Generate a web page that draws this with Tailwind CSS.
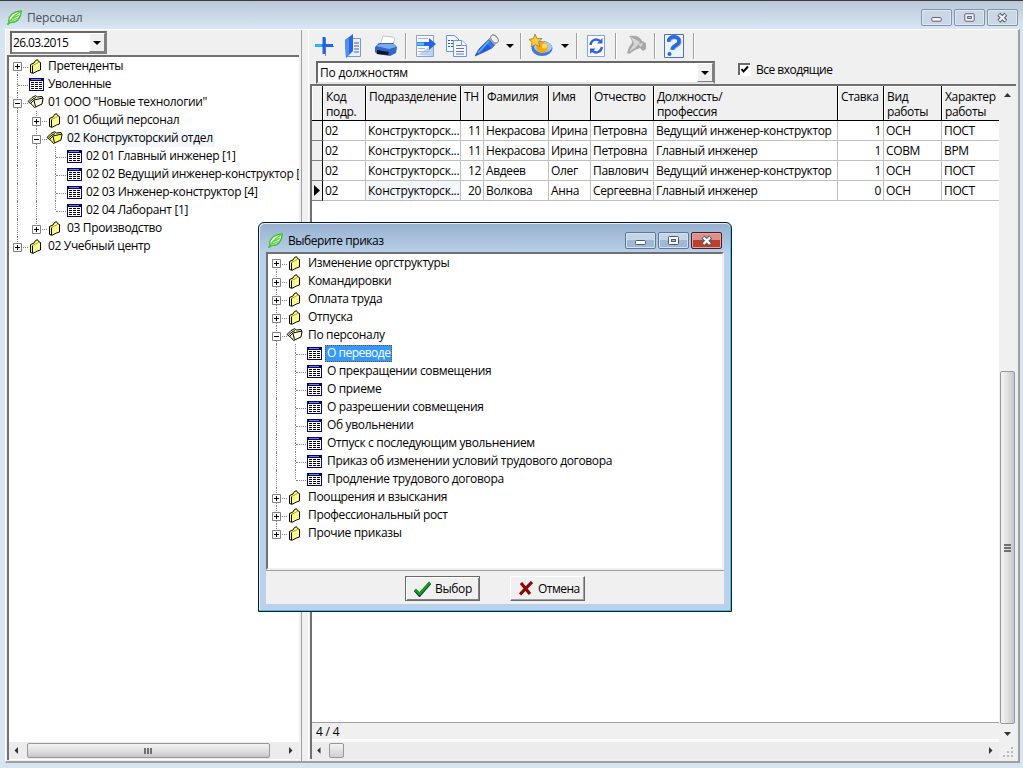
<!DOCTYPE html>
<html lang="ru">
<head>
  <meta charset="UTF-8" />
  <meta name="viewport" content="width=device-width, initial-scale=1.0" />
  <title>Персонал</title>
  <script src="https://cdn.jsdelivr.net/npm/@tailwindcss/browser@4"></script>
</head>
<body class="w-[1023px] h-[768px] overflow-hidden bg-[#d7e4f2] font-['Open_Sans','Noto_Sans',sans-serif] text-[12px] leading-[15px] tracking-[-0.34px] text-black cursor-default">

  <!-- Icon sprite -->
  <svg class="hidden">
    <symbol id="leaf" viewBox="0 0 15 15">
      <path d="M.8 14 2 12.6C.5 6 6 1.5 14.2.8 14 8 10 13 3.5 12.4L1.5 14z" fill="#eafbe0" stroke="#3fbf2c" stroke-width="1.3"/>
      <path d="M1 14C4 9 8 5 13.5 1.5M4 11 10.5 8.5M6 8.5 12 5" fill="none" stroke="#55cc3c" stroke-width="1.1"/>
    </symbol>
    <symbol id="book" viewBox="0 0 13 15">
      <path d="M1.500 5.500 5 4 6.500 1.500 8.500.7 9.500 2.500 11.500 3.500V11L8.500 12 4 14.300 1.500 13.500z" fill="#ffff70"/>
      <path d="M5.500 6V13M7.500 4V12M9.500 4V11" stroke="#fff" stroke-dasharray="1 1"/>
      <path d="M1.500 5.500 5 4 6.500 1.500 8.500.7 9.500 2.500 11.500 3.500V11L8.500 12 4 14.300 1.500 13.500z" fill="none" stroke="#000"/>
      <path d="M3.500 6.500V14" fill="none" stroke="#000"/>
      <path d="M3.500 6.500 9.500 3.500" fill="none" stroke="#808000" stroke-width=".7"/>
    </symbol>
    <symbol id="book-open" viewBox="0 0 17 14">
      <path d="M1 6.500 5 2.500 8.500.7 10.500 2 15 1.500 16 3.500 15 9 7.500 12.500 5 9.500z" fill="#ffff60" stroke="#000"/>
      <path d="M2.500 7 6 4 9 2.500M4 8 7 5 16 3M7 5.500 8.500 11.500" fill="none" stroke="#000"/>
    </symbol>
    <symbol id="book-white" viewBox="0 0 17 14">
      <path d="M1 6.500 5 2.500 8.500.7 10.500 2 15 1.500 16 3.500 15 9 7.500 12.500 5 9.500z" fill="#ffffd8" stroke="#000"/>
      <path d="M2.500 7 6 4 9 2.500M4 8 7 5 16 3M7 5.500 8.500 11.500" fill="none" stroke="#000"/>
    </symbol>
    <symbol id="table" viewBox="0 0 15 13">
      <path d="M0 0H15V13H0z" fill="#000080"/>
      <path d="M1 3H14V12H1z" fill="#fff"/>
      <path d="M2 1.5H12" stroke="#8080c0"/>
      <path d="M2 4.5H13M2 6.5H13M2 8.5H13M2 10.5H13" stroke="#000" stroke-dasharray="3 1"/>
    </symbol>
    <symbol id="tri-down" viewBox="0 0 8 4"><path d="M0 0H8L4 4z"/></symbol>
  </svg>

  <div class="relative w-[1023px] h-[768px] flex flex-col">
    <!-- Title bar -->
    <header class="h-[29px] shrink-0 border-t border-[#3b3b40] bg-linear-to-b from-[#b9c8d8] to-[#d9e6f4] flex items-start pl-[7px] pr-[5px]">
      <svg class="w-[15px] h-[15px] mt-[9px]"><use href="#leaf"/></svg>
      <span class="ml-[5px] mt-[9px] tracking-[-0.2px] text-[#4a525c]">Персонал</span>
      <div class="ml-auto mt-2 flex gap-[2px]">
        <div class="w-[31px] h-[17px] rounded-[2px] border border-[#8492a6] bg-[#c9d7e7] shadow-[inset_0_0_0_1px_#dfe9f4] flex justify-center items-center">
          <svg class="w-[31px] h-[15px]" viewBox="0 0 31 15"><rect x="10.5" y="7.5" width="10" height="4" rx="1" fill="#f4f4f4" stroke="#555b6b"/></svg>
        </div>
        <div class="w-[31px] h-[17px] rounded-[2px] border border-[#8492a6] bg-[#c9d7e7] shadow-[inset_0_0_0_1px_#dfe9f4] flex justify-center items-center">
          <svg class="w-[31px] h-[15px]" viewBox="0 0 31 15"><rect x="10.5" y="3.5" width="10" height="8" rx="1" fill="#f4f4f4" stroke="#555b6b"/><rect x="13.500" y="6.500" width="4" height="2" fill="#c9d7e7" stroke="#555b6b"/></svg>
        </div>
        <div class="w-[31px] h-[17px] rounded-[2px] border border-[#8492a6] bg-[#c9d7e7] shadow-[inset_0_0_0_1px_#dfe9f4] flex justify-center items-center">
          <svg class="w-[31px] h-[15px]" viewBox="0 0 31 15"><path d="M11.500 4 19 11.500M19 4 11.500 11.500" stroke="#555b6b" stroke-width="4.400"/><path d="M12 4.500 18.500 11M18.500 4.500 12 11" stroke="#f4f4f4" stroke-width="2.200"/></svg>
        </div>
      </div>
    </header>

    <!-- Client area -->
    <main class="ml-[5px] w-[1015px] h-[734px] bg-[#f0f0f0] border-t border-l border-white border-r-2 border-b-2 border-r-[#a0a0a0] border-b-[#a0a0a0] flex">

      <!-- Left panel -->
      <aside class="w-[296px] border-r border-[#a0a0a0] pl-[1px] flex flex-col">
        <div class="ml-[3px] mt-[1px] w-[97px] h-[23px] border-2 border-t-[#696969] border-l-[#696969] border-b-[#808080] border-r-[#808080] bg-white flex">
          <span class="pl-[1px] pt-[2px] grow tracking-[-0.6px]">26.03.2015</span>
          <div class="w-[16px] bg-[#f0f0f0] border border-t-white border-l-white border-r-[#808080] border-b-[#808080] flex items-center justify-center">
            <svg class="w-2 h-1"><use href="#tri-down"/></svg>
          </div>
        </div>
        <div class="mt-[1px] w-[292px] h-[705px] border-t-2 border-l-2 border-t-[#707070] border-l-[#707070] bg-white flex flex-col">
          <div id="staff-tree" class="grow overflow-hidden [&>div]:-ml-px"></div>
          <div class="h-[17px] mb-[1px] bg-[#ececec] flex items-center">
            <svg class="w-[18px] h-[17px]" viewBox="0 0 18 17"><path d="M9 5V12L5.500 8.500z" fill="#333"/></svg>
            <div class="w-[243px] h-[15px] rounded-[2px] border border-[#979797] bg-linear-to-b from-[#f4f4f4] via-[#e0e0e2] to-[#c6c6cb] flex justify-center items-center gap-[1px] pr-[2px]">
              <i class="w-[2px] h-[6px] bg-[#707070]"></i><i class="w-[2px] h-[6px] bg-[#707070]"></i><i class="w-[2px] h-[6px] bg-[#707070]"></i>
            </div>
            <svg class="ml-auto w-[18px] h-[17px]" viewBox="0 0 18 17"><path d="M8 5V12L11.500 8.500z" fill="#333"/></svg>
          </div>
        </div>
      </aside>

      <!-- Right panel -->
      <section class="ml-[6px] border-l border-white grow flex flex-col">
        <div class="h-[31px] flex items-center pl-[6px]">
          <svg class="w-[19px] h-[20px]" viewBox="0 0 19 20"><path d="M1 10.500H19M10.500 2V20" stroke="#888" stroke-width="1"/><path d="M0 9.500H18M9 1V18" stroke="#1f63e8" stroke-width="3"/><path d="M0 9.500H7" stroke="#2fc4f4" stroke-width="2.500"/></svg>
          <svg class="ml-[11px] w-[17px] h-[24px]" viewBox="0 0 17 24"><path d="M6.500 4.500H15.500V22.500H1.500" fill="#e8f0ff" stroke="#7d95c4"/><path d="M9 9H14M9 12H14M9 15H14M9 18H14" stroke="#555f85"/><path d="M0 6 8 0V17L1 24z" fill="#2a62e4"/><path d="M0 6 4 3V20L1 24z" fill="#4b92f2"/></svg>
          <svg class="ml-[12px] w-[24px] h-[22px]" viewBox="0 0 24 22"><path d="M6 10 9 1 19 2 21 4 18 11z" fill="#fff" stroke="#c4c4c4"/><path d="M1 12 5 8 19 8 23 12 22 18 16 21 3 19 1 17z" fill="#2f66c8"/><path d="M2 11 6 9 20 9 22 12 15 14z" fill="#79aaf0"/><path d="M3 15 15 17 14 20 3 19z" fill="#0c1526"/></svg>
          <div class="ml-[7px] w-px h-[26px] bg-[#a0a0a0] shadow-[1px_0_#fff]"></div>
          <svg class="ml-[9px] w-[22px] h-[24px]" viewBox="0 0 22 24"><path d="M1.500 1.500H18.500V22.500H1.500z" fill="#f4f8ff" stroke="#8ba0ce"/><path d="M3 21 18 10V22z" fill="#bcd0f0"/><path d="M3 4.500H13M3 14.500H10M3 17.500H14" stroke="#a8b4d0"/><path d="M2 8H14V4L21 10 14 16V12H2z" fill="#2464e4"/><path d="M2 8.500H9V11.500H2z" fill="#55bdf6"/></svg>
          <svg class="ml-[8px] w-[23px] h-[24px]" viewBox="0 0 23 24"><path d="M1.500 1.500H9L13.500 5V17.500H1.500z" fill="#f0f7ff" stroke="#6c93dc"/><path d="M3 6.500H8M3 9.500H8M3 12.500H8" stroke="#444f90" stroke-dasharray="2 1"/><path d="M8.500 6.500H17L21.500 11V22.500H8.500z" fill="#f4f9ff" stroke="#6c93dc"/><path d="M11 11.500H16M11 14.500H19M11 17.500H19M11 20H19" stroke="#6876a6"/><path d="M16.500 6.500V11.500H21.500" fill="#fff" stroke="#6c93dc"/></svg>
          <svg class="ml-[7px] w-[24px] h-[23px]" viewBox="0 0 24 23"><path d="M0 22 4 15 11 8 17 14 9 18z" fill="#1f5ae0" stroke="#123d9e" stroke-width=".6"/><path d="M11 8 17 2 22 8 17 14z" fill="#c4d0e0" stroke="#777" stroke-width=".7"/><path d="M14 5 20 11 17 14 11 8z" fill="#3b70e0"/><path d="M3 19 14 7" stroke="#53a4f6" stroke-width="2"/><ellipse cx="19.500" cy="5" rx="3" ry="4.500" transform="rotate(-40 19.500 5)" fill="#f2f2f2" stroke="#888"/></svg>
          <svg class="ml-[7px] w-2 h-1"><use href="#tri-down"/></svg>
          <div class="ml-[6px] w-px h-[26px] bg-[#a0a0a0] shadow-[1px_0_#fff]"></div>
          <svg class="ml-[8px] w-[24px] h-[23px]" viewBox="0 0 24 23"><ellipse cx="13" cy="14.500" rx="10.500" ry="7.500" fill="#3b78e0"/><ellipse cx="14" cy="13" rx="9" ry="5.500" fill="#a9c9f6"/><circle cx="13" cy="13.500" r="5.800" fill="#f4a818"/><circle cx="15.500" cy="12" r="2.500" fill="#ffdc4c"/><path d="M6 0 8 4.500 13 4.500 9.500 8 11 13 6.500 10.500 2 13 3 8 0 5.500 4.500 4.500z" fill="#f8c840" stroke="#a8781a" stroke-width=".8"/></svg>
          <svg class="ml-[8px] w-2 h-1"><use href="#tri-down"/></svg>
          <div class="ml-[7px] w-px h-[26px] bg-[#a0a0a0] shadow-[1px_0_#fff]"></div>
          <svg class="ml-[10px] w-[19px] h-[22px]" viewBox="0 0 19 22"><path d="M.5.500H17.500V21.500H.500z" fill="#fff" stroke="#86a4dc"/><path d="M3.500 10C4 5 9 3 13 6M15 12C14 17 9 19 5.500 16" fill="none" stroke="#2c62e8" stroke-width="2.400"/><path d="M10 8.500H15.500V3zM8.500 13.500H3V19z" fill="#2c62e8"/></svg>
          <div class="ml-[9px] w-px h-[26px] bg-[#a0a0a0] shadow-[1px_0_#fff]"></div>
          <svg class="ml-[10px] w-[21px] h-[21px]" viewBox="0 0 21 21"><path d="M3 1C9 0 14 1 16 6L20 8V14L17 16 14 13 9 15 3 19 1 18 3 12 6 8C6 5 5 3 3 1z" fill="#a8a8a8"/><path d="M5 2 14 7 9 13 3 17 8 9zM12 9 17 8 15 12z" fill="#d6d6d6"/></svg>
          <div class="ml-[7px] w-px h-[26px] bg-[#a0a0a0] shadow-[1px_0_#fff]"></div>
          <svg class="ml-[9px] w-[20px] h-[24px]" viewBox="0 0 20 24"><path d="M.5.500H19.500V23.500H.500z" fill="#eaf5ff" stroke="#5a6cae"/><path d="M5 8C5 1.500 16.500 2 15.500 8 15 12 9 11.500 8.500 16" fill="none" stroke="#8c96a8" stroke-width="4"/><path d="M4.500 7.500C4.500 1 16 1.500 15 7.500 14.500 11.500 8.500 11 8 15.500" fill="none" stroke="#246ae8" stroke-width="3.400"/><circle cx="5.500" cy="20" r="2" fill="#246ae8"/></svg>
          <div class="ml-[9px] w-px h-[26px] bg-[#a0a0a0] shadow-[1px_0_#fff]"></div>
        </div>
        <div class="h-[23px] flex pl-[7px]">
          <div class="w-[399px] h-[23px] border-2 border-t-[#696969] border-l-[#696969] border-b-[#e3e3e3] border-r-[#808080] bg-white flex">
            <span class="pl-[2px] pt-[2px] grow tracking-[-0.2px]">По должностям</span>
            <div class="w-[16px] bg-[#f0f0f0] border border-t-white border-l-white border-r-[#808080] border-b-[#808080] flex items-center justify-center">
              <svg class="w-2 h-1"><use href="#tri-down"/></svg>
            </div>
          </div>
          <div class="ml-[23px] mt-[2px] w-[12px] h-[12px] border-t-2 border-l-2 border-[#696969] bg-white shadow-[1px_1px_#fff]">
            <svg class="w-[9px] h-[9px]" viewBox="0 0 9 9"><path d="M1.500 4 3.500 6.500 8 1.500" fill="none" stroke="#000" stroke-width="2"/></svg>
          </div>
          <span class="ml-[6px] mt-[1px] tracking-[-0.5px]">Все входящие</span>
        </div>

        <div class="ml-[1px] w-[706px] h-[675px] border-t-2 border-l-2 border-t-[#707070] border-l-[#707070] grid grid-cols-[687px_17px] grid-rows-[654px_19px]">
          <!-- Grid -->
          <div class="flex flex-col bg-white overflow-hidden">
            <div id="grid-head" class="flex h-[35px] shrink-0 bg-[#f0f0f0] border-b border-black leading-[15px]"></div>
            <div id="grid-body" class="grow"></div>
            <div class="h-[18px] bg-[#f0f0f0] border-t border-[#a0a0a0] border-b border-b-white pl-[4px] pt-[1px]"><span class="tracking-[-0.2px]">4 / 4</span></div>
          </div>
          <!-- Vertical scrollbar -->
          <div class="bg-[#f0f0f0] flex flex-col items-center">
            <svg class="w-[17px] h-[17px]" viewBox="0 0 17 17"><path d="M5 11H12L8.500 7z" fill="#333"/></svg>
            <div class="mt-[268px] w-[15px] h-[353px] shrink-0 rounded-[2px] border border-[#979797] bg-linear-to-r from-[#f4f4f4] via-[#e0e0e2] to-[#c6c6cb] flex flex-col items-center justify-center gap-[1px] pr-px">
              <i class="w-[7px] h-[2px] bg-[#707070]"></i><i class="w-[7px] h-[2px] bg-[#707070]"></i><i class="w-[7px] h-[2px] bg-[#707070]"></i>
            </div>
            <svg class="w-[17px] h-[16px]" viewBox="0 0 17 16"><path d="M5 8H12L8.500 12z" fill="#333"/></svg>
          </div>
          <!-- Horizontal scrollbar -->
          <div class="bg-[#ececec] border-t-2 border-[#f8f8f8] flex items-center">
            <svg class="w-[17px] h-[17px]" viewBox="0 0 18 17"><path d="M9 5V12L5.500 8.500z" fill="#333"/></svg>
            <div class="w-[15px] h-[15px] rounded-[2px] border border-[#979797] bg-linear-to-b from-[#f4f4f4] to-[#d0d0d4]"></div>
            <svg class="ml-auto w-[18px] h-[17px]" viewBox="0 0 18 17"><path d="M8 5V12L11.500 8.500z" fill="#333"/></svg>
          </div>
          <svg class="w-[17px] h-[19px]" viewBox="0 0 17 19"><path d="M4 16H14M8 12H14M12 8H14" stroke="#b8b8b8" stroke-width="2" stroke-dasharray="2 2"/></svg>
        </div>
      </section>
    </main>

    <!-- Order dialog -->
    <div class="absolute left-[258px] top-[222px] w-[474px] h-[390px] rounded-t-[6px] border border-[#101820] bg-[#b9d1ea] shadow-[inset_-1px_-1px_#35c5e8,inset_1px_1px_#e4eef8] px-[7px] pb-[7px] flex flex-col">
      <div class="h-[28px] shrink-0 -mx-[6px] mt-[1px] rounded-t-[5px] bg-linear-to-b from-[#97b2d0] to-[#b7cfe8] flex pl-[8px] pr-[8px]">
        <svg class="w-[15px] h-[15px] mt-[9px]"><use href="#leaf"/></svg>
        <span class="ml-[5px] mt-[9px] tracking-[-0.45px]">Выберите приказ</span>
        <div class="ml-auto mt-[8px] flex gap-[2px]">
          <div class="w-[31px] h-[17px] rounded-[2px] border border-[#5f7894] bg-linear-to-b from-[#c4d5e8] from-50% to-[#9fb9d4] to-50% shadow-[inset_0_0_0_1px_#d3e1f0]">
            <svg class="w-[29px] h-[15px]" viewBox="0 0 29 15"><rect x="9.500" y="7.500" width="10" height="4" rx="1" fill="#fff" stroke="#50586a"/></svg>
          </div>
          <div class="w-[31px] h-[17px] rounded-[2px] border border-[#5f7894] bg-linear-to-b from-[#c4d5e8] from-50% to-[#9fb9d4] to-50% shadow-[inset_0_0_0_1px_#d3e1f0]">
            <svg class="w-[29px] h-[15px]" viewBox="0 0 29 15"><rect x="9.500" y="3.500" width="10" height="8" rx="1" fill="#fff" stroke="#50586a"/><rect x="12.500" y="6.500" width="4" height="2" fill="#9fb9d4" stroke="#50586a"/></svg>
          </div>
          <div class="w-[31px] h-[17px] rounded-[2px] border border-[#4a1a28] bg-linear-to-b from-[#dd9088] from-50% to-[#b8402c] to-50% shadow-[inset_0_0_0_1px_#e2a69c]">
            <svg class="w-[29px] h-[15px]" viewBox="0 0 29 15"><path d="M11 4 18.500 11.500M18.500 4 11 11.500" stroke="#50586a" stroke-width="4.400"/><path d="M11.500 4.500 18 11M18 4.500 11.500 11" stroke="#fff" stroke-width="2.400"/></svg>
          </div>
        </div>
      </div>
      <div class="h-[318px] shrink-0 border-2 border-t-[#707070] border-l-[#707070] border-r-[#f0f0f0] border-b-[#f0f0f0] bg-white">
        <div id="order-tree" class="h-full overflow-hidden [&>div]:-ml-px [&_span]:ml-px"></div>
      </div>
      <div class="grow bg-[#f0f0f0] border-t border-[#a0a0a0] flex gap-[30px] pl-[139px] pt-[5px]">
        <button class="w-[75px] h-[25px] border border-[#696969] shadow-[inset_1px_1px_#fff,inset_-1px_-1px_#808080] flex items-center pl-[8px]">
          <svg class="w-[17px] h-[16px]" viewBox="0 0 17 16"><path d="M1 9 5.500 14 16 2" fill="none" stroke="#101850" stroke-width="3.200"/><path d="M1 8.500 5.500 13 16 1.500" fill="none" stroke="#12a012" stroke-width="2.600"/></svg>
          <span class="ml-[4px]">Выбор</span>
        </button>
        <button class="w-[75px] h-[25px] border border-t-white border-l-white border-r-[#696969] border-b-[#696969] shadow-[inset_-1px_-1px_#a0a0a0] flex items-center pl-[8px]">
          <svg class="w-[14px] h-[15px]" viewBox="0 0 14 15"><path d="M2 2 11 13M13 1 1 13.500" stroke="#8a0808" stroke-width="3.200"/></svg>
          <span class="ml-[5px] tracking-[-0.5px]">Отмена</span>
        </button>
      </div>
    </div>
  </div>

  <script>
    // level, expander, icon, text; "last" ends the guide line of its branch
    const staff = [
      { level: 0, box: "+", icon: "book", text: "Претенденты" },
      { level: 0, box: "", icon: "table", text: "Уволенные" },
      { level: 0, box: "-", icon: "book-white", text: '01 ООО "Новые технологии"' },
      { level: 1, box: "+", icon: "book", text: "01 Общий персонал" },
      { level: 1, box: "-", icon: "book-open", text: "02 Конструкторский отдел", current: true },
      { level: 2, box: "", icon: "table", text: "02 01 Главный инженер [1]" },
      { level: 2, box: "", icon: "table", text: "02 02 Ведущий инженер-конструктор [" },
      { level: 2, box: "", icon: "table", text: "02 03 Инженер-конструктор [4]" },
      { level: 2, box: "", icon: "table", text: "02 04 Лаборант [1]", last: true },
      { level: 1, box: "+", icon: "book", text: "03 Производство", last: true },
      { level: 0, box: "+", icon: "book", text: "02 Учебный центр", last: true },
    ];

    const orders = [
      { level: 0, box: "+", icon: "book", text: "Изменение оргструктуры" },
      { level: 0, box: "+", icon: "book", text: "Командировки" },
      { level: 0, box: "+", icon: "book", text: "Оплата труда" },
      { level: 0, box: "+", icon: "book", text: "Отпуска" },
      { level: 0, box: "-", icon: "book-white", text: "По персоналу" },
      { level: 1, box: "", icon: "table", text: "О переводе", selected: true },
      { level: 1, box: "", icon: "table", text: "О прекращении совмещения" },
      { level: 1, box: "", icon: "table", text: "О приеме" },
      { level: 1, box: "", icon: "table", text: "О разрешении совмещения" },
      { level: 1, box: "", icon: "table", text: "Об увольнении" },
      { level: 1, box: "", icon: "table", text: "Отпуск с последующим увольнением" },
      { level: 1, box: "", icon: "table", text: "Приказ об изменении условий трудового договора" },
      { level: 1, box: "", icon: "table", text: "Продление трудового договора", last: true },
      { level: 0, box: "+", icon: "book", text: "Поощрения и взыскания" },
      { level: 0, box: "+", icon: "book", text: "Профессиональный рост" },
      { level: 0, box: "+", icon: "book", text: "Прочие приказы", last: true },
    ];

    const iconClass = {
      "book": "w-[13px] h-[15px] ml-[2px]",
      "book-open": "w-[17px] h-[14px]",
      "book-white": "w-[17px] h-[14px]",
      "table": "w-[15px] h-[13px] ml-[2px] mt-px",
    };

    function renderTree(id, items) {
      document.getElementById(id).innerHTML = items.map((item, i) => {
        const guides = '<div class="w-[19px] h-[18px] shrink-0 flex justify-center"><i class="border-l border-dotted border-[#808080]"></i></div>'.repeat(item.level);
        const up = i === 0 ? "" : '<i class="absolute left-[9px] top-0 h-[9px] border-l border-dotted border-[#808080]"></i>';
        const down = item.last ? "" : '<i class="absolute left-[9px] top-[9px] h-[9px] border-l border-dotted border-[#808080]"></i>';
        const sign = item.box === "+" ? '<path d="M4.500 2V7" stroke="#000"/>' : "";
        const box = item.box ? `<svg class="absolute left-[5px] ${i ? "top-[6px]" : "top-[5px]"} w-[9px] h-[9px]" viewBox="0 0 9 9"><path d="M.5.5H8.500V8.500H.500z" fill="#fff" stroke="#808080"/><path d="M2 4.500H7" stroke="#000"/>${sign}</svg>` : "";
        const label = item.selected ? "bg-[#3399ff] text-white tracking-[-0.5px] outline outline-dotted outline-[#8a4a10] outline-offset-[-1px]" : item.current ? "bg-[#f3f6fb]" : "";
        return `<div class="flex h-[18px] items-center whitespace-nowrap">
          ${guides}
          <div class="relative w-[19px] h-[18px] shrink-0">${up}${down}<i class="absolute left-[10px] top-[10px] w-[10px] border-t border-dotted border-[#808080]"></i>${box}</div>
          <div class="w-[19px] h-[18px] shrink-0 flex items-center"><svg class="${iconClass[item.icon]}"><use href="#${item.icon}"/></svg></div>
          <span class="h-[17px] px-[2px] ${label}">${item.text}</span>
        </div>`;
      }).join("");
    }

    const cols = [
      { title: "", cls: "w-[11px]" },
      { title: "Код<br>подр.", cls: "w-[43px]" },
      { title: "Подразделение", cls: "w-[95px]" },
      { title: "ТН", cls: "w-[23px]" },
      { title: "Фамилия", cls: "w-[65px]" },
      { title: "Имя", cls: "w-[42px]" },
      { title: "Отчество", cls: "w-[63px]" },
      { title: "Должность/<br>профессия", cls: "w-[184px]" },
      { title: "Ставка", cls: "w-[46px]" },
      { title: "Вид<br>работы", cls: "w-[58px]" },
      { title: "Характер<br>работы", cls: "w-[60px]" },
    ];

    const rows = [
      ["", "02", "Конструкторск...", "11", "Некрасова", "Ирина", "Петровна", "Ведущий инженер-конструктор", "1", "ОСН", "ПОСТ"],
      ["", "02", "Конструкторск...", "11", "Некрасова", "Ирина", "Петровна", "Главный инженер", "1", "СОВМ", "ВРМ"],
      ["", "02", "Конструкторск...", "12", "Авдеев", "Олег", "Павлович", "Ведущий инженер-конструктор", "1", "ОСН", "ПОСТ"],
      ["", "02", "Конструкторск...", "20", "Волкова", "Анна", "Сергеевна", "Главный инженер", "0", "ОСН", "ПОСТ"],
    ];

    document.getElementById("grid-head").innerHTML = cols.map(c =>
      `<div class="${c.cls} shrink-0 border-r border-black pl-[3px] pt-[3px] tracking-[-0.35px] whitespace-nowrap overflow-hidden shadow-[inset_1px_1px_#fff]">${c.title}</div>`
    ).join("");

    document.getElementById("grid-body").innerHTML = rows.map((row, r) =>
      `<div class="flex h-[20px] tracking-[-0.35px]">${row.map((cell, c) => {
        if (c === 0) {
          return `<div class="w-[11px] shrink-0 bg-[#f0f0f0] border-r border-black border-b border-b-[#808080]">${r === 3 ? '<svg class="w-[10px] h-[19px]" viewBox="0 0 10 19"><path d="M2 4V15L8 9.500z"/></svg>' : ""}</div>`;
        }
        const align = c === 3 || c === 8 ? "text-right pr-[2px]" : c === 2 ? "pl-[2px] tracking-[-0.2px]" : "pl-[2px]";
        const active = r === 3 && c === 2 ? "bg-[#f3f6fb]" : "";
        return `<div class="${cols[c].cls} ${align} ${active} shrink-0 h-[20px] pt-[2px] border-r border-b border-[#c0c0c0] whitespace-nowrap overflow-hidden">${cell}</div>`;
      }).join("")}</div>`
    ).join("");

    renderTree("staff-tree", staff);
    renderTree("order-tree", orders);
  </script>
</body>
</html>
